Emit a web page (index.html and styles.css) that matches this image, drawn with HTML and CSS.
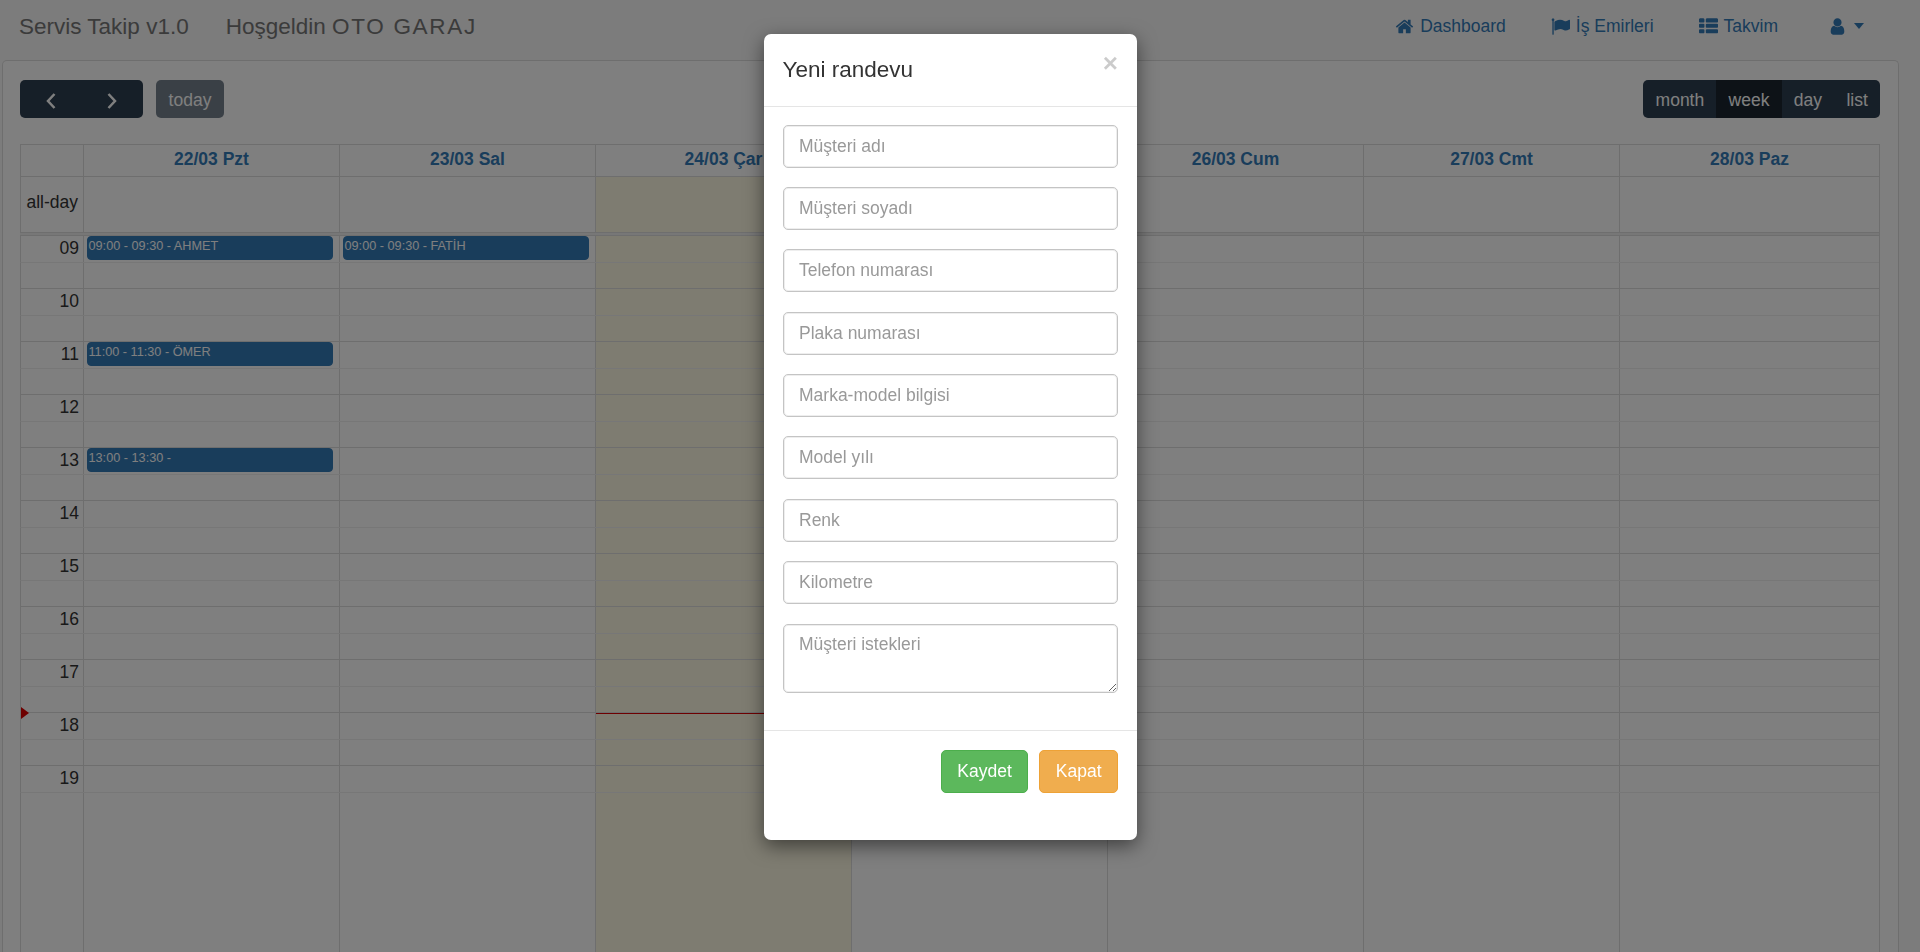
FILE: index.html
```html
<!DOCTYPE html>
<html lang="tr">
<head>
    <meta charset="UTF-8">
    <meta name="viewport" content="width=device-width, initial-scale=1.0">
    <title>Servis Takip v1.0</title>
    <link rel="stylesheet" href="styles.css">
</head>
<body>
    <nav class="navbar">
        <a class="brand">Servis Takip v1.0</a>
        <span class="brand welcome">Hoşgeldin <span class="garage">OTO GARAJ</span></span>
        <ul class="nav-links">
            <li>
                <svg class="icon" viewBox="0 0 1792 1792"><path d="M1472 992v480q0 26-19 45t-45 19h-384v-384h-256v384h-384q-26 0-45-19t-19-45v-480q0-1 .5-3t.5-3l575-474 575 474q1 2 1 6zm223-69l-62 74q-8 9-21 11h-3q-13 0-21-7l-692-577-692 577q-12 8-24 7-13-2-21-11l-62-74q-8-10-7-23.500t11-21.500l719-599q32-26 76-26t76 26l244 204v-195q0-14 9-23t23-9h192q14 0 23 9t9 23v408l219 182q10 8 11 21.500t-7 23.500z"/></svg>
                Dashboard
            </li>
            <li>
                <svg class="icon" viewBox="0 0 1792 1792"><path d="M320 256q0 72-64 110v1266q0 13-9.500 22.500t-22.500 9.500h-64q-13 0-22.500-9.500t-9.500-22.500v-1266q-64-38-64-110 0-53 37.500-90.500t90.500-37.500 90.500 37.500 37.500 90.500zm1472 64v763q0 25-12.500 38.500t-39.500 27.500q-215 116-369 116-61 0-123.500-22t-108.500-48-115.500-48-142.500-22q-192 0-464 146-17 9-33 9-26 0-45-19t-19-45v-742q0-32 31-55 21-14 79-43 236-120 421-120 107 0 200 29t219 88q38 19 88 19 54 0 117.500-21t110-47 88-47 54.500-21q26 0 45 19t19 45z"/></svg>
                İş Emirleri
            </li>
            <li>
                <svg class="icon" viewBox="0 0 1792 1792"><path d="M512 1248v192q0 40-28 68t-68 28h-320q-40 0-68-28t-28-68v-192q0-40 28-68t68-28h320q40 0 68 28t28 68zm0-512v192q0 40-28 68t-68 28h-320q-40 0-68-28t-28-68v-192q0-40 28-68t68-28h320q40 0 68 28t28 68zm1280 512v192q0 40-28 68t-68 28h-960q-40 0-68-28t-28-68v-192q0-40 28-68t68-28h960q40 0 68 28t28 68zm-1280-1024v192q0 40-28 68t-68 28h-320q-40 0-68-28t-28-68v-192q0-40 28-68t68-28h320q40 0 68 28t28 68zm1280 512v192q0 40-28 68t-68 28h-960q-40 0-68-28t-28-68v-192q0-40 28-68t68-28h960q40 0 68 28t28 68zm0-512v192q0 40-28 68t-68 28h-960q-40 0-68-28t-28-68v-192q0-40 28-68t68-28h960q40 0 68 28t28 68z"/></svg>
                Takvim
            </li>
            <li class="user-menu">
                <svg class="icon" viewBox="0 0 1792 1792"><path d="M1536 1399q0 109-62.500 187t-150.500 78h-854q-88 0-150.500-78t-62.500-187q0-85 8.500-160.500t31.500-152 58.500-131 94-89 134.500-34.500q131 128 313 128t313-128q76 0 134.500 34.500t94 89 58.500 131 31.500 152 8.500 160.500zm-256-887q0 159-112.500 271.500t-271.500 112.500-271.500-112.500-112.500-271.500 112.500-271.500 271.500-112.500 271.500 112.500 112.500 271.500z"/></svg>
                <span class="caret"></span>
            </li>
        </ul>
    </nav>

    <div class="panel">
        <div class="toolbar">
            <div class="btn-group">
                <button class="fc-btn arrow"><svg viewBox="0 0 12 18"><polyline points="9.500,2 3,9 9.500,16"/></svg></button>
                <button class="fc-btn arrow"><svg viewBox="0 0 12 18"><polyline points="2.500,2 9,9 2.500,16"/></svg></button>
            </div>
            <button class="fc-btn today">today</button>
            <div class="btn-group views">
                <button class="fc-btn">month</button>
                <button class="fc-btn active">week</button>
                <button class="fc-btn">day</button>
                <button class="fc-btn">list</button>
            </div>
        </div>

        <div class="calendar">
            <div class="cal-row head">
                <div class="cell axis"></div>
                <div class="cell">22/03 Pzt</div>
                <div class="cell">23/03 Sal</div>
                <div class="cell">24/03 Çar</div>
                <div class="cell">25/03 Per</div>
                <div class="cell">26/03 Cum</div>
                <div class="cell">27/03 Cmt</div>
                <div class="cell">28/03 Paz</div>
            </div>
            <div class="cal-row all-day">
                <div class="cell axis">all-day</div>
                <div class="cell"></div>
                <div class="cell"></div>
                <div class="cell today-col"></div>
                <div class="cell"></div>
                <div class="cell"></div>
                <div class="cell"></div>
                <div class="cell"></div>
            </div>
            <div class="divider"></div>

            <div class="time-grid">
                <div class="cal-row columns">
                    <div class="col axis"></div>
                    <div class="col">
                        <div class="event" style="top: 0px">09:00 - 09:30 - AHMET</div>
                        <div class="event" style="top: 106px">11:00 - 11:30 - ÖMER</div>
                        <div class="event" style="top: 212px">13:00 - 13:30 -</div>
                    </div>
                    <div class="col">
                        <div class="event" style="top: 0px">09:00 - 09:30 - FATİH</div>
                    </div>
                    <div class="col today-col">
                        <div class="now-line" style="top: 476.5px"></div>
                    </div>
                    <div class="col"></div>
                    <div class="col"></div>
                    <div class="col"></div>
                    <div class="col"></div>
                </div>
                <div class="now-arrow" style="top: 470.5px"></div>
                <div class="slots" id="slots"></div>
            </div>
        </div>
    </div>

    <div class="backdrop"></div>

    <div class="modal">
        <div class="modal-header">
            <h4>Yeni randevu</h4>
            <span class="close">×</span>
        </div>
        <form class="modal-body">
            <input type="text" placeholder="Müşteri adı">
            <input type="text" placeholder="Müşteri soyadı">
            <input type="text" placeholder="Telefon numarası">
            <input type="text" placeholder="Plaka numarası">
            <input type="text" placeholder="Marka-model bilgisi">
            <input type="text" placeholder="Model yılı">
            <input type="text" placeholder="Renk">
            <input type="text" placeholder="Kilometre">
            <textarea placeholder="Müşteri istekleri"></textarea>
        </form>
        <div class="modal-footer">
            <button class="btn green">Kaydet</button>
            <button class="btn orange">Kapat</button>
        </div>
    </div>

    <script>
        const slots = document.getElementById('slots');
        for (let hour = 9; hour <= 19; hour++) {
            const label = String(hour).padStart(2, '0');
            slots.innerHTML += `<div class="slot major"><span>${label}</span></div><div class="slot minor"></div>`;
        }
    </script>
</body>
</html>
```

FILE: styles.css
```css
* {
    box-sizing: border-box;
}

html, body {
    height: 952px;
    overflow: hidden;
}

body {
    margin: 0;
    font-family: "Liberation Sans", Arial, sans-serif;
    font-size: 17.5px;
    color: #333;
    background-color: #f8f8f8;
}

.navbar {
    display: flex;
    align-items: center;
    height: 60px;
    padding: 0 20px 8px 19px;
}

.brand {
    padding-top: 2px;
    font-size: 22.5px;
    color: #777;
}

.welcome {
    margin-left: 37px;
}

.garage {
    letter-spacing: 1.7px;
}

.nav-links {
    display: flex;
    align-items: center;
    margin: 0 0 0 auto;
    padding: 0;
    list-style: none;
    color: #337ab7;
    gap: 45px;
    padding-right: 36px;
}

.nav-links li {
    display: flex;
    align-items: center;
    gap: 6px;
}

.icon {
    width: 19px;
    height: 19px;
    fill: #337ab7;
}

.user-menu {
    margin-left: 5px;
}

.caret {
    width: 0;
    height: 0;
    margin-left: 1px;
    border-top: 6px solid #337ab7;
    border-left: 5px solid transparent;
    border-right: 5px solid transparent;
}

.panel {
    height: 892px;
    margin: 0 21px 0 2px;
    padding: 19px 18px 0 17px;
    background-color: #fff;
    border: 1px solid #ddd;
    border-bottom: none;
    border-radius: 5px 5px 0 0;
}

.toolbar {
    display: flex;
    align-items: flex-start;
    height: 64px;
}

.btn-group {
    display: flex;
    border-radius: 5px;
    overflow: hidden;
}

.views {
    margin-left: auto;
}

.fc-btn {
    height: 37.5px;
    padding: 4px 12.2px 0;
    border: none;
    font-family: inherit;
    font-size: 17.5px;
    color: #fff;
    background-color: #2c3e50;
}

.fc-btn.arrow {
    display: flex;
    align-items: center;
    justify-content: center;
    width: 61.5px;
}

.arrow svg {
    width: 12px;
    height: 18px;
    fill: none;
    stroke: #fff;
    stroke-width: 2.5;
}

.fc-btn.active {
    background-color: #1a252f;
}

.fc-btn.today {
    width: 68px;
    margin-left: 13px;
    padding: 4px 0 0;
    border-radius: 5px;
    opacity: 0.65;
    color: #fff;
}

.calendar {
    border-top: 1px solid #ddd;
    border-right: 1px solid #ddd;
}

.cal-row {
    display: grid;
    grid-template-columns: 63px repeat(6, 256px) 1fr;
}

.cell {
    border-left: 1px solid #ddd;
}

.head {
    height: 31.5px;
    border-bottom: 1px solid #ddd;
}

.head .cell {
    line-height: 29.5px;
    text-align: center;
    font-weight: bold;
    color: #337ab7;
}

.all-day {
    height: 55.500px;
}

.axis {
    text-align: right;
    padding-right: 5px;
}

.all-day .axis {
    line-height: 50px;
}

.today-col {
    background-color: #fcf8e3;
}

.divider {
    height: 4px;
    background-color: #eee;
    border-top: 1px solid #ddd;
    border-bottom: 1px solid #ddd;
}

.time-grid {
    position: relative;
    height: 720px;
}

.slots {
    position: absolute;
    top: 0;
    left: 0;
    right: 0;
    pointer-events: none;
}

.slot {
    height: 26.5px;
    border-bottom: 1px solid #ddd;
    border-left: 1px solid #ddd;
}

.slot:last-child {
    border-bottom: none;
}

.slot.major {
    text-align: right;
    border-bottom-color: #eee;
}

.slot.major span {
    display: block;
    width: 63px;
    padding-right: 5px;
    line-height: 25px;
}

.columns {
    height: 100%;
}

.col {
    position: relative;
    border-left: 1px solid #ddd;
}

.event {
    position: absolute;
    z-index: 1;
    top: 0;
    left: 2.500px;
    right: 6px;
    height: 24px;
    padding: 0 1px;
    font-size: 12.7px;
    line-height: 18px;
    color: #fff;
    background-color: #337ab7;
    border: 1px solid #337ab7;
    border-radius: 4px;
}

.now-line {
    position: absolute;
    z-index: 1;
    left: 0;
    right: 0;
    border-top: 1px solid #d00;
}

.now-arrow {
    position: absolute;
    z-index: 1;
    left: 1px;
    border-left: 8px solid #d00;
    border-top: 6.5px solid transparent;
    border-bottom: 6.5px solid transparent;
}

.backdrop {
    position: fixed;
    top: 0;
    left: 0;
    right: 0;
    bottom: 0;
    z-index: 10;
    background-color: #000;
    opacity: 0.5;
}

.modal {
    position: absolute;
    z-index: 11;
    top: 33.5px;
    left: 764px;
    width: 373px;
    height: 806px;
    background-color: #fff;
    border-radius: 7px;
    box-shadow: 0 6px 19px rgba(0, 0, 0, 0.5);
}

.modal-header {
    display: flex;
    justify-content: space-between;
    height: 73px;
    padding: 19px 19px 0 18.500px;
    border-bottom: 1px solid #e5e5e5;
}

.modal-header h4 {
    margin: 0;
    font-size: 22.5px;
    font-weight: normal;
    line-height: 34px;
}

.close {
    margin-top: -3px;
    font-size: 26px;
    font-weight: bold;
    line-height: 26px;
    color: #000;
    opacity: 0.2;
}

.modal-body {
    display: flex;
    flex-direction: column;
    gap: 19.4px;
    height: 624px;
    padding: 18px 19px 0;
    border-bottom: 1px solid #e5e5e5;
}

input, textarea {
    display: block;
    flex: none;
    width: 100%;
    height: 43px;
    padding: 7.5px 15px;
    border: 1px solid #c4c4c4;
    border-radius: 5px;
    font-family: inherit;
    font-size: 17.5px;
    line-height: 25px;
    color: #555;
    box-shadow: inset 0 0 0 1px #eee;
}

textarea {
    height: 69px;
    resize: vertical;
}

::placeholder {
    color: #999;
    opacity: 1;
}

.modal-footer {
    display: flex;
    justify-content: flex-end;
    gap: 11px;
    padding: 19px 19px 0;
}

.btn {
    height: 43.5px;
    padding: 0 15.500px;
    border: 1px solid transparent;
    border-radius: 5px;
    font-family: inherit;
    font-size: 17.5px;
    color: #fff;
}

.green {
    background-color: #5cb85c;
    border-color: #4cae4c;
}

.orange {
    background-color: #f0ad4e;
    border-color: #eea236;
}
```
